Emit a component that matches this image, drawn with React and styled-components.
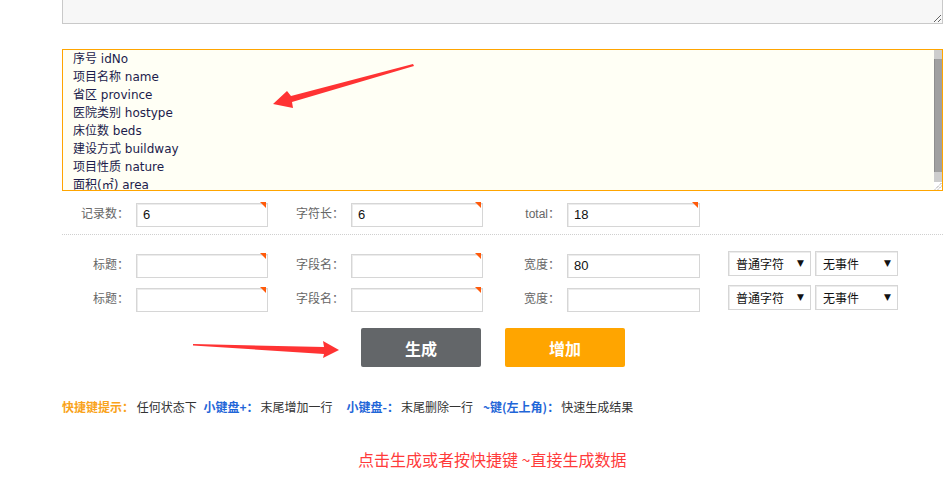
import React from "react";
import styled, { createGlobalStyle } from "styled-components";

const Global = createGlobalStyle`
  html, body { margin: 0; padding: 0; background: #fff; }
  body { width: 950px; height: 478px; overflow: hidden; font-family: "Noto Sans CJK SC", "Liberation Sans", sans-serif; }
`;

const Page = styled.div`
  position: relative;
  width: 950px;
  height: 478px;
  overflow: hidden;
  padding-left: 62px;
  box-sizing: border-box;
`;

const TopArea = styled.textarea`
  display: block;
  box-sizing: border-box;
  width: 881px;
  height: 120px;
  margin: -96px 0 0 0;
  border: 1px solid #c9c9c9;
  background: #f7f7f7;
  resize: both;
  outline: none;
`;

const AreaWrap = styled.div`
  position: relative;
  width: 881px;
  height: 142px;
  margin-top: 25px;
`;

const FieldsArea = styled.textarea`
  display: block;
  box-sizing: border-box;
  width: 881px;
  height: 142px;
  margin: 0;
  padding: 0 10px;
  border: 1px solid #ffa500;
  background: #fffff5;
  color: #1c1c4c;
  font-family: "DejaVu Sans", "Noto Sans CJK SC", sans-serif;
  font-size: 12px;
  line-height: 18px;
  resize: none;
  outline: none;
  overflow: hidden;
`;

const ScrollBar = styled.div`
  position: absolute;
  top: 1px;
  right: 1px;
  bottom: 1px;
  width: 8px;
  display: flex;
  flex-direction: column;
  background: #cdcdcd;
`;

const ScrollStep = styled.div`
  height: ${(p) => p.$h}px;
  flex: none;
  background: #cdcdcd;
`;

const ScrollThumb = styled.div`
  height: 113px;
  flex: none;
  box-sizing: border-box;
  background: #a0a0a0;
  border-left: 1px solid #8e8e8e;
`;

const Resizer = styled.div`
  margin-top: auto;
  height: 8px;
  flex: none;
  background: #fff;
  display: flex;
`;

const Row = styled.div`
  display: flex;
  align-items: center;
  height: 24px;
  margin-top: ${(p) => p.$mt}px;
`;

const Separator = styled.div`
  width: 881px;
  margin-top: 10px;
  border-top: 1px dotted #cfcfcf;
`;

const Label = styled.span`
  box-sizing: border-box;
  width: ${(p) => p.$w}px;
  padding-right: 7px;
  text-align: right;
  font-size: 12px;
  color: #666;
  font-family: ${(p) => (p.$latin ? `"Liberation Sans", "Noto Sans CJK SC", sans-serif` : `"Noto Sans CJK SC", sans-serif`)};
  white-space: nowrap;
`;

const InputWrap = styled.div`
  position: relative;
  width: ${(p) => p.$w || 132}px;
  height: 24px;
  &::after {
    content: "";
    display: ${(p) => (p.$mark ? "block" : "none")};
    position: absolute;
    top: 2px;
    right: 2px;
    width: 0;
    height: 0;
    border-top: 6px solid #ff5a0a;
    border-left: 6px solid transparent;
  }
`;

const Input = styled.input`
  box-sizing: border-box;
  width: 100%;
  height: 100%;
  border: 1px solid #d6d6d6;
  box-shadow: inset 1px 1px 0 #ececec;
  padding: 0 6px;
  font-family: "Liberation Sans", "Noto Sans CJK SC", sans-serif;
  font-size: 13px;
  color: #111;
  background: #fff;
  outline: none;
`;

const SelectBox = styled.div`
  box-sizing: border-box;
  width: 83px;
  height: 25px;
  margin-left: ${(p) => p.$ml}px;
  border: 1px solid #d6d6d6;
  box-shadow: inset 1px 1px 0 #ececec;
  display: flex;
  align-items: center;
  justify-content: space-between;
  padding: 0 6px 0 7px;
  font-size: 12px;
  color: #111;
  font-family: "Noto Sans CJK SC", sans-serif;
`;

const Caret = styled.span`
  font-size: 9px;
  color: #111;
  font-family: "DejaVu Sans", sans-serif;
`;

const Buttons = styled.div`
  display: flex;
  gap: 24px;
  margin-top: 19px;
  padding-left: 299px;
`;

const Btn = styled.button`
  width: 120px;
  height: 39px;
  border: none;
  border-radius: 2px;
  background: ${(p) => p.$bg};
  color: #fff;
  font-family: "Noto Sans CJK SC", sans-serif;
  font-weight: 700;
  font-size: 16px;
  cursor: pointer;
`;

const Hint = styled.div`
  margin-top: 31px;
  font-size: 12px;
  line-height: 18px;
  color: #333;
  white-space: nowrap;
  font-family: "Noto Sans CJK SC", sans-serif;
`;

const HintTitle = styled.span`
  color: #f9a31b;
  font-weight: 700;
`;

const Key = styled.span`
  color: #1f66d8;
  font-weight: 700;
  margin-left: ${(p) => p.$ml || 0}px;
  padding-right: 2px;
`;

const Notice = styled.div`
  margin-top: 33px;
  padding-left: 296px;
  font-size: 16px;
  line-height: 20px;
  color: #ff3b3b;
  font-family: "Noto Sans CJK SC", sans-serif;
`;

const Overlay = styled.svg`
  position: absolute;
  left: 0;
  top: 0;
  pointer-events: none;
`;

const lines = [
  "序号 idNo",
  "项目名称 name",
  "省区 province",
  "医院类别 hostype",
  "床位数 beds",
  "建设方式 buildway",
  "项目性质 nature",
  "面积(㎡) area",
  "总投资 invest",
].join("\n");

function Field({ label, w, value, mark, latin, iw }) {
  return (
    <>
      <Label $w={w} $latin={latin}>{label}</Label>
      <InputWrap $mark={mark} $w={iw}>
        <Input defaultValue={value} />
      </InputWrap>
    </>
  );
}

export default function App() {
  return (
    <>
      <Global />
      <Page>
        <TopArea />
        <AreaWrap>
          <FieldsArea defaultValue={lines} spellCheck={false} />
          <ScrollBar>
            <ScrollStep $h={9} />
            <ScrollThumb />
            <ScrollStep $h={10} />
            <Resizer>
              <svg width="8" height="8" viewBox="0 0 8 8">
                <line x1="1" y1="7.5" x2="7.5" y2="1" stroke="#777" strokeWidth="1" strokeDasharray="1 1" />
                <line x1="4" y1="7.5" x2="7.5" y2="4" stroke="#777" strokeWidth="1" strokeDasharray="1 1" />
              </svg>
            </Resizer>
          </ScrollBar>
        </AreaWrap>
        <Row $mt={9}>
          <Field label="记录数：" w={74} value="6" mark />
          <Field label="字符长：" w={83} value="6" mark />
          <Field label="total：" w={84} value="18" mark latin iw={133} />
        </Row>
        <Separator />
        <Row $mt={16}>
          <Field label="标题：" w={74} value="" mark />
          <Field label="字段名：" w={83} value="" mark />
          <Field label="宽度：" w={84} value="80" iw={133} />
          <SelectBox $ml={28}>普通字符<Caret>▼</Caret></SelectBox>
          <SelectBox $ml={4}>无事件<Caret>▼</Caret></SelectBox>
        </Row>
        <Row $mt={10}>
          <Field label="标题：" w={74} value="" mark />
          <Field label="字段名：" w={83} value="" mark />
          <Field label="宽度：" w={84} value="" iw={133} />
          <SelectBox $ml={28}>普通字符<Caret>▼</Caret></SelectBox>
          <SelectBox $ml={4}>无事件<Caret>▼</Caret></SelectBox>
        </Row>
        <Buttons>
          <Btn $bg="#636669">生成</Btn>
          <Btn $bg="#ffa500">增加</Btn>
        </Buttons>
        <Hint>
          <HintTitle>快捷键提示：</HintTitle> 任何状态下 <Key $ml={4}>小键盘+：</Key>末尾增加一行
          <Key $ml={14}>小键盘-：</Key>末尾删除一行
          <Key $ml={10}>~键(左上角)：</Key>快速生成结果
        </Hint>
        <Notice>点击生成或者按快捷键 ~直接生成数据</Notice>
        <Overlay width="950" height="478" viewBox="0 0 950 478">
          <polygon
            points="413,64 291,96 287,91 273,104 293,108 292,102 414,66"
            fill="#ff3333"
          />
          <polygon
            points="193,344 324,347 323,341 339,350 323,358 324,354 193,345.5"
            fill="#ff3333"
          />
        </Overlay>
      </Page>
    </>
  );
}
